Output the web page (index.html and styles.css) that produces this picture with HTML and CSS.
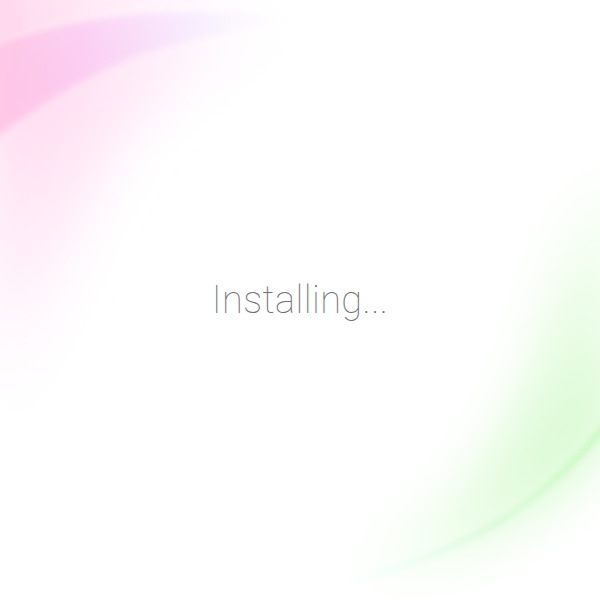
FILE: index.html
```html
<!DOCTYPE html>
<html>
<head>
<meta charset="utf-8">
<link rel="stylesheet" href="styles.css">
</head>
<body>
<div class="screen">
  <svg class="backdrop" viewBox="0 0 600 600" width="600" height="600" aria-hidden="true">
    <defs>
      <linearGradient id="pinkTop" x1="0" y1="0" x2="1" y2="0">
        <stop offset="0" stop-color="#ffd2ea" stop-opacity="0.9"/>
        <stop offset="0.5" stop-color="#ffeef9" stop-opacity="0.6"/>
        <stop offset="1" stop-color="#ffffff" stop-opacity="0"/>
      </linearGradient>
      <linearGradient id="pinkEdge" x1="0" y1="0" x2="1" y2="0">
        <stop offset="0" stop-color="#ffb4da"/>
        <stop offset="0.3" stop-color="#fac0f2"/>
        <stop offset="0.65" stop-color="#f3eaff"/>
        <stop offset="1" stop-color="#ffffff" stop-opacity="0"/>
      </linearGradient>
      <radialGradient id="pinkBody" cx="0" cy="0.08" r="0.95">
        <stop offset="0" stop-color="#ffc4e2"/>
        <stop offset="0.35" stop-color="#ffdcf2"/>
        <stop offset="0.7" stop-color="#fff3fc"/>
        <stop offset="1" stop-color="#ffffff" stop-opacity="0"/>
      </radialGradient>
      <radialGradient id="greenBody" cx="1" cy="0.82" r="0.9">
        <stop offset="0" stop-color="#c8f8c0"/>
        <stop offset="0.4" stop-color="#e4fcde"/>
        <stop offset="0.8" stop-color="#f7fff5"/>
        <stop offset="1" stop-color="#ffffff" stop-opacity="0"/>
      </radialGradient>
      <linearGradient id="greenEdge" x1="1" y1="0" x2="0" y2="0">
        <stop offset="0" stop-color="#bff6b4"/>
        <stop offset="0.45" stop-color="#d6fad6"/>
        <stop offset="0.8" stop-color="#e8fff8"/>
        <stop offset="1" stop-color="#ffffff" stop-opacity="0"/>
      </linearGradient>
      <filter id="soft" x="-20%" y="-20%" width="140%" height="140%"><feGaussianBlur stdDeviation="10"/></filter>
      <filter id="softer" x="-20%" y="-20%" width="140%" height="140%"><feGaussianBlur stdDeviation="3"/></filter>
      <filter id="wide" x="-30%" y="-30%" width="160%" height="160%"><feGaussianBlur stdDeviation="25"/></filter>
    </defs>
    <path d="M-20,-20 L360,-20 Q200,0 120,12 Q40,25 -20,60 Z" fill="url(#pinkTop)" filter="url(#soft)"/>
    <path d="M-20,50 Q60,15 160,12 Q240,10 330,22 Q200,50 120,150 Q60,260 20,420 L-20,430 Z" fill="url(#pinkBody)" filter="url(#wide)" opacity="0.75"/>
    <path d="M-20,52 Q60,18 160,13 Q240,10 320,20 Q220,28 140,55 Q60,85 -20,150 Z" fill="url(#pinkEdge)" filter="url(#softer)" opacity="0.6"/>
    <path d="M620,150 Q560,220 540,320 Q520,420 440,500 Q380,550 300,590 Q420,580 500,540 Q580,490 620,420 Z" fill="url(#greenBody)" filter="url(#wide)"/>
    <path d="M620,410 Q580,470 500,525 Q420,570 320,588 Q440,560 520,505 Q580,460 620,400 Z" fill="url(#greenEdge)" filter="url(#softer)" opacity="0.9"/>
  </svg>
  <div class="message">Installing...</div>
</div>
</body>
</html>
```
FILE: styles.css
```css
html, body {
  margin: 0;
  padding: 0;
  background: #ffffff;
}
.screen {
  position: relative;
  width: 600px;
  height: 600px;
  overflow: hidden;
  display: flex;
  align-items: center;
  justify-content: center;
}
.backdrop {
  position: absolute;
  left: 0;
  top: 0;
}
.message {
  position: relative;
  font-family: Roboto, "Noto Sans", sans-serif;
  font-weight: 100;
  font-size: 38px;
  color: #707070;
  letter-spacing: 0.4px;
}
```
